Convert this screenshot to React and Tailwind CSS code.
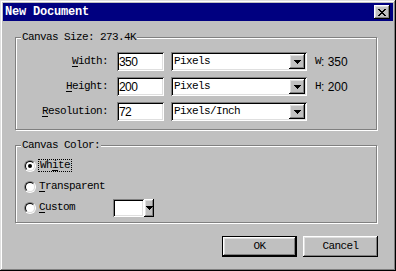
import React from "react";

const mono = { fontFamily: '"Liberation Mono", "Noto Sans CJK SC", monospace' };
const sans = { fontFamily: '"Liberation Sans", Arial, sans-serif' };

const raised =
  "shadow-[inset_-1px_-1px_#000,inset_1px_1px_#fff,inset_-2px_-2px_#808080,inset_2px_2px_#dfdfdf]";
const sunken =
  "shadow-[inset_1px_1px_#808080,inset_-1px_-1px_#fff,inset_2px_2px_#000,inset_-2px_-2px_#dfdfdf]";
const etched = "border border-[#808080] shadow-[inset_1px_1px_#fff,1px_1px_#fff]";

const CloseGlyph = () => {
  const rows = ["11000011", "01100110", "00111100", "00011000", "00111100", "01100110", "11000011"];
  return (
    <svg width="8" height="7" viewBox="0 0 8 7" shapeRendering="crispEdges">
      {rows.map((r, y) =>
        r.split("").map((c, x) => (c === "1" ? <rect key={`${x}-${y}`} x={x} y={y} width="1" height="1" fill="#000" /> : null))
      )}
    </svg>
  );
};

const Arrow = () => (
  <svg width="7" height="4" viewBox="0 0 7 4" shapeRendering="crispEdges">
    <rect x="0" y="0" width="7" height="1" fill="#000" />
    <rect x="1" y="1" width="5" height="1" fill="#000" />
    <rect x="2" y="2" width="3" height="1" fill="#000" />
    <rect x="3" y="3" width="1" height="1" fill="#000" />
  </svg>
);

const Label = ({ pre = "", u, post }) => (
  <span>
    {pre}
    <span className="underline underline-offset-[2px]">{u}</span>
    {post}
  </span>
);

const Select = ({ value }) => (
  <div className={`ml-[7px] w-[136px] h-[19px] bg-white ${sunken} flex items-center p-[2px]`}>
    <span className="flex-1 pl-[1px] leading-[15px]">{value}</span>
    <div className={`w-[16px] h-[15px] bg-[#c0c0c0] ${raised} flex items-center justify-center`}>
      <Arrow />
    </div>
  </div>
);

const Row = ({ label, value, unit, extra }) => (
  <div className="flex items-center h-[19px]">
    <div className="w-[88px] text-right">{label}</div>
    <div className={`ml-[9px] w-[47px] h-[19px] bg-white ${sunken} flex items-center pl-[2px] pt-[1px] text-[12px]`} style={sans}>
      {value}
    </div>
    <Select value={unit} />
    {extra && (
      <div className="ml-[8px] flex items-center">
        <span>{extra[0]}</span>
        <span className="text-[12px] tracking-normal whitespace-pre" style={sans}>{`: ${extra[1]}`}</span>
      </div>
    )}
  </div>
);

const Radio = ({ checked }) => (
  <div className="w-[12px] h-[12px] rounded-full border border-t-[#808080] border-l-[#808080] border-r-white border-b-white">
    <div className="w-full h-full rounded-full border border-t-black border-l-black border-r-[#dfdfdf] border-b-[#dfdfdf] bg-white flex items-center justify-center">
      {checked && <div className="w-[4px] h-[4px] rounded-full bg-black" />}
    </div>
  </div>
);

export default function App() {
  return (
    <div
      className="w-[396px] h-[271px] bg-[#c0c0c0] p-[3px] flex flex-col text-[11px] tracking-[-0.6px] text-black shadow-[inset_-1px_-1px_#000,inset_1px_1px_#dfdfdf,inset_-2px_-2px_#808080,inset_2px_2px_#fff]"
      style={mono}
    >
      <div className="h-[18px] bg-[#000080] flex items-center justify-between pl-[2px] pr-[3px]">
        <span className="text-white font-bold text-[12px] tracking-[-0.2px]">New Document</span>
        <div className={`w-[16px] h-[14px] bg-[#c0c0c0] ${raised} flex items-center justify-center`}>
          <CloseGlyph />
        </div>
      </div>

      <div className="pl-[12px] pr-[16px] flex flex-col">
        <div className={`mt-[16px] ${etched} pb-[8px]`}>
          <div className="-mt-[7px] ml-[5px] w-fit bg-[#c0c0c0] px-[1px] leading-[12px]">Canvas Size: 273.4K</div>
          <div className="mt-[9px] pl-[4px] flex flex-col gap-[6px]">
            <Row label={<Label u="W" post="idth:" />} value="350" unit="Pixels" extra={["W", "350"]} />
            <Row label={<Label u="H" post="eight:" />} value="200" unit="Pixels" extra={["H", "200"]} />
            <Row label={<Label u="R" post="esolution:" />} value="72" unit="Pixels/Inch" />
          </div>
        </div>

        <div className={`mt-[15px] ${etched} pb-[4px]`}>
          <div className="-mt-[7px] ml-[5px] w-fit bg-[#c0c0c0] px-[1px] leading-[12px]">Canvas Color:</div>
          <div className="mt-[4px] pl-[8px] flex flex-col">
            <div className="h-[21px] flex items-center gap-[2px]">
              <Radio checked />
              <span className="border border-dotted border-black px-[1px] leading-[11px]">
                <Label pre="Wh" u="i" post="te" />
              </span>
            </div>
            <div className="h-[21px] flex items-center gap-[3px]">
              <Radio />
              <Label u="T" post="ransparent" />
            </div>
            <div className="h-[21px] flex items-center gap-[3px]">
              <Radio />
              <span className="w-[71px]">
                <Label u="C" post="ustom" />
              </span>
              <div className={`w-[31px] h-[18px] bg-white ${sunken}`} />
              <div className={`-ml-[3px] w-[10px] h-[18px] bg-[#c0c0c0] ${raised} flex items-center justify-center`}>
                <Arrow />
              </div>
            </div>
          </div>
        </div>

        <div className="mt-[13px] -mr-[1px] flex justify-end gap-[6px]">
          <button className="w-[75px] h-[21px] border border-black bg-[#c0c0c0]">
            <div className={`w-full h-full ${raised} flex items-center justify-center`}>OK</div>
          </button>
          <button className={`w-[75px] h-[21px] bg-[#c0c0c0] ${raised} flex items-center justify-center`}>Cancel</button>
        </div>
      </div>
    </div>
  );
}
